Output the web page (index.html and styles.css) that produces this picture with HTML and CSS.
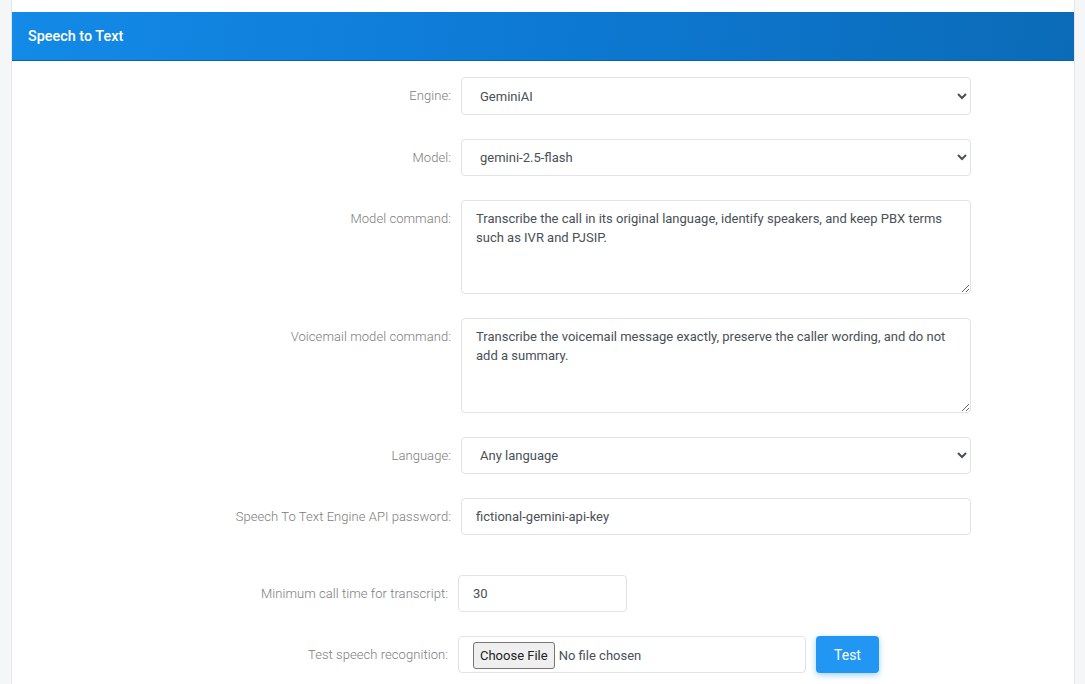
FILE: index.html
```html
<!DOCTYPE html>
<html lang="en">
<head>
<meta charset="utf-8">
<title>Speech to Text</title>
<link rel="stylesheet" href="styles.css">
</head>
<body>
<div class="page">
  <div class="card">
    <div class="card-header">Speech to Text</div>
    <div class="card-body">
      <div class="section">
        <div class="row">
          <label class="label">Engine:</label>
          <div class="control"><select class="select first"><option>GeminiAI</option></select></div>
        </div>
        <div class="row">
          <label class="label">Model:</label>
          <div class="control"><select class="select"><option>gemini-2.5-flash</option></select></div>
        </div>
        <div class="row">
          <label class="label">Model command:</label>
          <div class="control"><textarea class="textarea">Transcribe the call in its original language, identify speakers, and keep PBX terms such as IVR and PJSIP.</textarea></div>
        </div>
        <div class="row">
          <label class="label">Voicemail model command:</label>
          <div class="control"><textarea class="textarea tall">Transcribe the voicemail message exactly, preserve the caller wording, and do not add a summary.</textarea></div>
        </div>
        <div class="row">
          <label class="label">Language:</label>
          <div class="control"><select class="select"><option>Any language</option></select></div>
        </div>
        <div class="row">
          <label class="label">Speech To Text Engine API password:</label>
          <div class="control"><input class="input" type="text" value="fictional-gemini-api-key"></div>
        </div>
      </div>
      <div class="section second">
        <div class="row">
          <label class="label">Minimum call time for transcript:</label>
          <div class="control"><input class="input short" type="text" value="30"></div>
        </div>
        <div class="row">
          <label class="label">Test speech recognition:</label>
          <div class="control inline">
            <div class="file-box"><input type="file" class="file"></div>
            <button class="btn" type="button">Test</button>
          </div>
        </div>
      </div>
    </div>
  </div>
</div>
</body>
</html>
```
FILE: styles.css
```css
* { box-sizing: border-box; }
html, body { margin: 0; padding: 0; }
body {
  background: #f5f6f8;
  font-family: Roboto, "Liberation Sans", Arial, sans-serif;
  font-size: 13px;
  color: #495057;
}
.page {
  padding: 0 10px 0 11px;
  height: 684px;
  overflow: hidden;
}
.card {
  background: #fff;
  border-left: 1px solid #e3e5e8;
  border-right: 1px solid #e3e5e8;
  padding-top: 12px;
  min-height: 684px;
}
.card-header {
  height: 49px;
  padding: 0 16px;
  display: flex;
  align-items: center;
  background: linear-gradient(100deg, #138ae7 0%, #0d79d4 50%, #0b6bb7 100%);
  border-bottom: 1px solid #0a62a8;
  color: #fff;
  font-size: 14.4px;
  font-weight: 500;
}
.card-body {
  padding-top: 16px;
}
.section {
  display: flex;
  flex-direction: column;
  gap: 24px;
}
.section.second {
  margin-top: 40px;
}
.row {
  display: grid;
  grid-template-columns: 439px 510px;
  column-gap: 10px;
  align-items: start;
}
.section.second .row {
  grid-template-columns: 436px auto;
}
.label {
  text-align: right;
  color: #7c7c7c;
  padding-top: 9px;
  line-height: 19px;
  font-weight: 300;
  letter-spacing: 0.06px;
}
.select, .input, .textarea {
  display: block;
  width: 100%;
  border: 1px solid #e2e2e2;
  border-radius: 4px;
  background: #fff;
  font-family: inherit;
  font-size: 13px;
  color: #495057;
  outline: none;
}
.select {
  height: 37px;
  padding: 0 8px 0 14px;
}
.select.first { height: 38px; }
.input {
  height: 37px;
  padding: 0 14px;
}
.input.short { width: 169px; }
.textarea {
  height: 94px;
  padding: 8px 14px;
  line-height: 19px;
  resize: vertical;
}
.textarea.tall { height: 95px; }
.control.inline {
  display: flex;
  align-items: center;
  gap: 10px;
}
.file-box {
  width: 348px;
  height: 37px;
  border: 1px solid #e2e2e2;
  border-radius: 4px;
  display: flex;
  align-items: center;
  padding: 2px 14px 0;
}
.file {
  font-family: inherit;
  font-size: 13px;
  color: #495057;
}
.file::file-selector-button {
  font-family: inherit;
  font-size: 13px;
  color: #222;
  padding: 5px 6px;
  margin-right: 4px;
  border: 1px solid #767676;
  border-radius: 3px;
  background: #efefef;
}
.btn {
  width: 63px;
  height: 37px;
  border: none;
  border-radius: 4px;
  background: #2196f3;
  color: #fff;
  font-family: inherit;
  font-size: 14px;
  box-shadow: 0 2px 6px rgba(33, 150, 243, 0.45);
  cursor: pointer;
}
```
